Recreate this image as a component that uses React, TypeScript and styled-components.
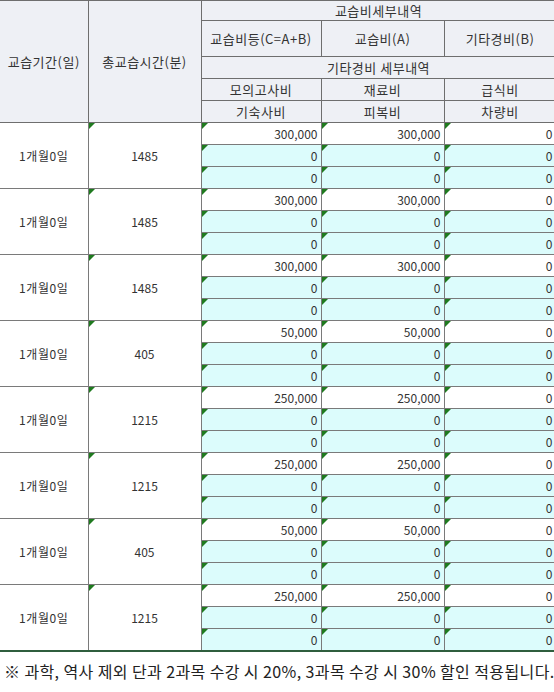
import React from "react";
import styled, { createGlobalStyle } from "styled-components";

const Global = createGlobalStyle`
  html, body { margin: 0; padding: 0; background: #fff; overflow: hidden; }
  body { font-family: "Noto Sans CJK KR", "Noto Sans", sans-serif; color: #333; }
`;

const Page = styled.div`
  width: 554px;
  overflow: hidden;
`;

const Table = styled.table`
  border-collapse: collapse;
  table-layout: fixed;
  width: 556px;
  border-bottom: 2px solid #2f5e3e;
  font-size: 12px;
`;

const Head = styled.th<{ $h?: number }>`
  background: #eef0f5;
  font-weight: normal;
  font-size: 13px;
  letter-spacing: 0.5px;
  color: #333;
  height: ${(p) => p.$h ?? 21}px;
  padding: 0;
  border: 1px solid #6e6e6e;
  text-align: center;
  line-height: 1;
  &:first-child { border-left: none; }
`;

const Cell = styled.td<{ $alt?: boolean; $num?: boolean; $mark?: boolean; $label?: boolean }>`
  position: relative;
  height: 21px;
  padding: ${(p) => (p.$num ? "0 3px 0 0" : "0")};
  border: 1px solid #7a7a7a;
  background: ${(p) => (p.$alt ? "#dcfcfc" : "#fff")};
  text-align: ${(p) => (p.$num ? "right" : "center")};
  letter-spacing: ${(p) => (p.$label ? "0.6px" : "0")};
  line-height: 1;
  color: #333;
  &:first-child { border-left: none; }
  ${(p) =>
    p.$mark
      ? `&::before {
    content: "";
    position: absolute;
    left: 0;
    top: 0;
    width: 0;
    height: 0;
    border-top: 6px solid #1f7a1f;
    border-right: 6px solid transparent;
  }`
      : ""}
`;

const Note = styled.p`
  margin: 0;
  padding: 7px 0 0 4px;
  font-size: 16px;
  letter-spacing: 0.4px;
  color: #222;
  white-space: nowrap;
`;

type Group = { minutes: string; fee: string };

const groups: Group[] = [
  { minutes: "1485", fee: "300,000" },
  { minutes: "1485", fee: "300,000" },
  { minutes: "1485", fee: "300,000" },
  { minutes: "405", fee: "50,000" },
  { minutes: "1215", fee: "250,000" },
  { minutes: "1215", fee: "250,000" },
  { minutes: "405", fee: "50,000" },
  { minutes: "1215", fee: "250,000" },
];

export default function App() {
  return (
    <Page>
      <Global />
      <Table>
        <colgroup>
          <col style={{ width: 88 }} />
          <col style={{ width: 113 }} />
          <col style={{ width: 120 }} />
          <col style={{ width: 123 }} />
          <col style={{ width: 112 }} />
        </colgroup>
        <thead>
          <tr>
            <Head rowSpan={5}>교습기간(일)</Head>
            <Head rowSpan={5}>총교습시간(분)</Head>
            <Head colSpan={3} $h={19}>교습비세부내역</Head>
          </tr>
          <tr>
            <Head $h={35}>교습비등(C=A+B)</Head>
            <Head $h={35}>교습비(A)</Head>
            <Head $h={35}>기타경비(B)</Head>
          </tr>
          <tr>
            <Head colSpan={3}>기타경비 세부내역</Head>
          </tr>
          <tr>
            <Head>모의고사비</Head>
            <Head>재료비</Head>
            <Head>급식비</Head>
          </tr>
          <tr>
            <Head>기숙사비</Head>
            <Head>피복비</Head>
            <Head>차량비</Head>
          </tr>
        </thead>
        <tbody>
          {groups.map((g, i) => (
            <React.Fragment key={i}>
              <tr>
                <Cell rowSpan={3} $label>1개월0일</Cell>
                <Cell rowSpan={3} $mark>{g.minutes}</Cell>
                <Cell $num $mark>{g.fee}</Cell>
                <Cell $num $mark>{g.fee}</Cell>
                <Cell $num $mark>0</Cell>
              </tr>
              <tr>
                <Cell $num $mark $alt>0</Cell>
                <Cell $num $mark $alt>0</Cell>
                <Cell $num $mark $alt>0</Cell>
              </tr>
              <tr>
                <Cell $num $mark $alt>0</Cell>
                <Cell $num $mark $alt>0</Cell>
                <Cell $num $mark $alt>0</Cell>
              </tr>
            </React.Fragment>
          ))}
        </tbody>
      </Table>
      <Note>※ 과학, 역사 제외 단과 2과목 수강 시 20%, 3과목 수강 시 30% 할인 적용됩니다.</Note>
    </Page>
  );
}
